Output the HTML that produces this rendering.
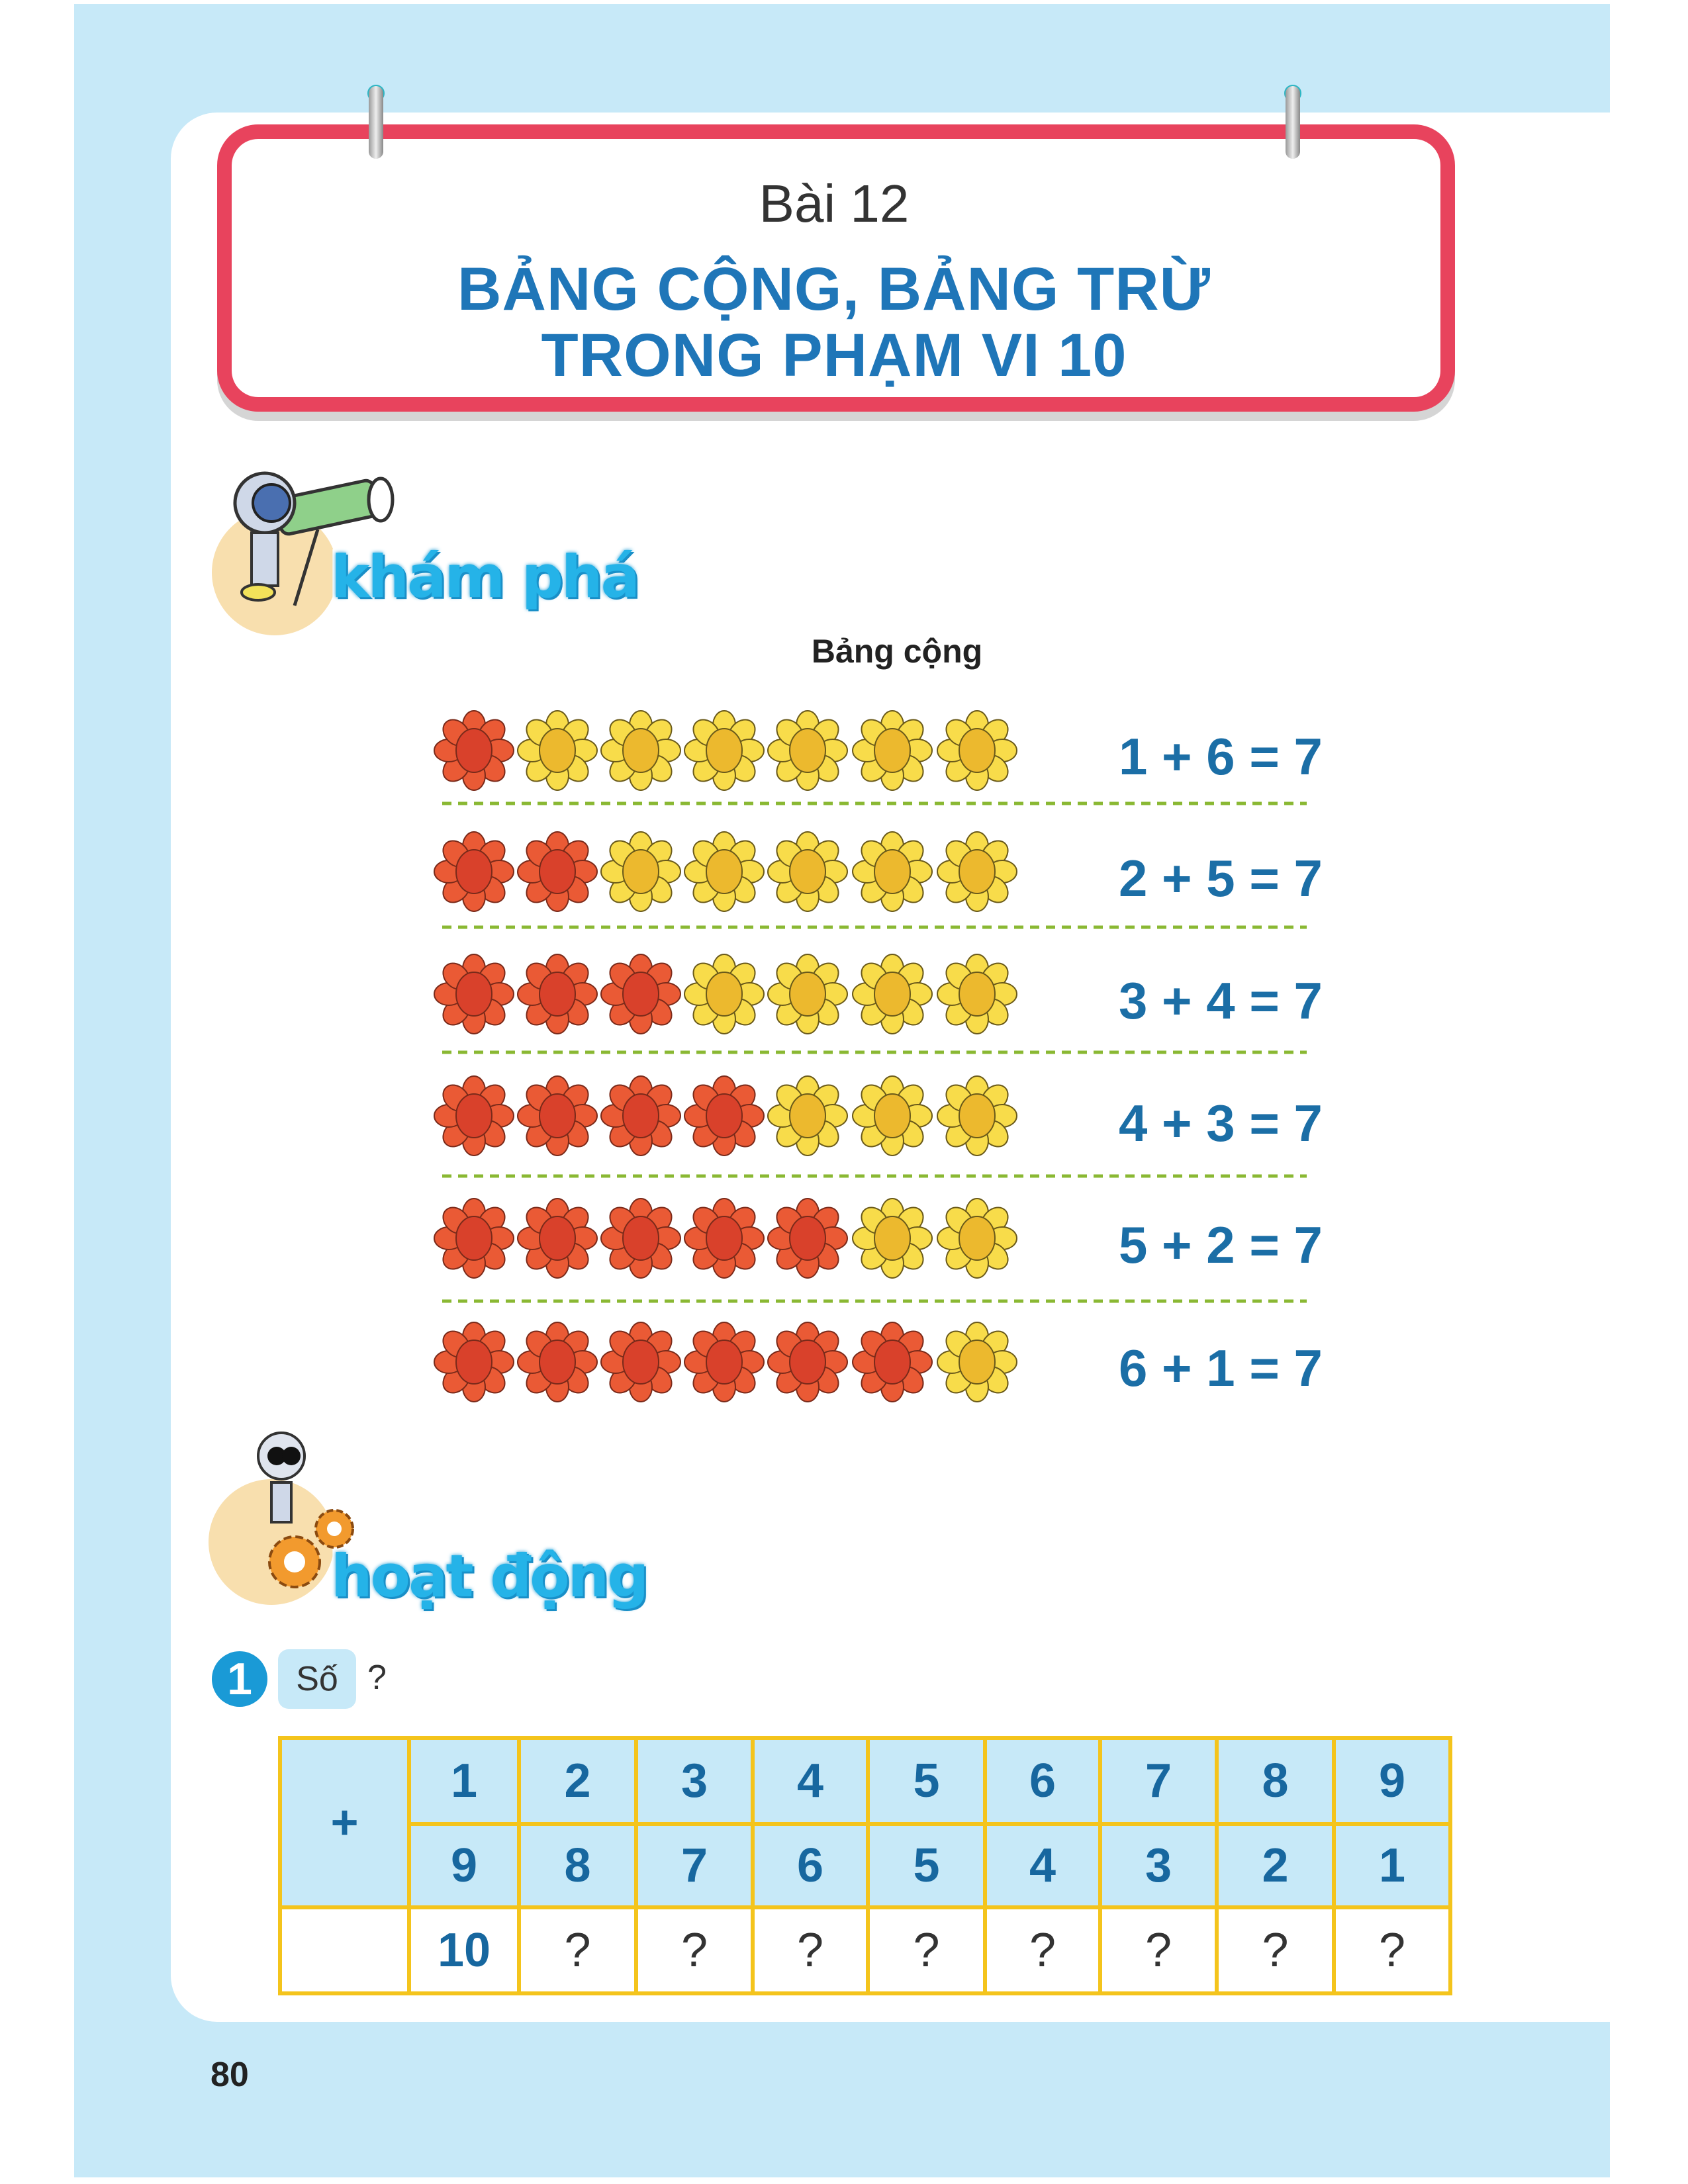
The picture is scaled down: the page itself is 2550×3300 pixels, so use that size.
<!DOCTYPE html>
<html><head><meta charset="utf-8"><style>
html,body{margin:0;padding:0}
body{width:2550px;height:3300px;position:relative;background:#fff;overflow:hidden;font-family:"Liberation Sans",sans-serif}
.abs{position:absolute}
.bg{left:112px;top:6px;width:2320px;height:3284px;background:#c7e9f8}
.panel{left:258px;top:170px;width:2174px;height:2885px;background:#fff;border-radius:70px 0 0 70px}
.title{left:328px;top:188px;width:1870px;height:434px;box-sizing:border-box;border:22px solid #e8435d;border-radius:62px;background:#fff;box-shadow:0 14px 0 #d5d5d5}
.t1{left:0;width:2520px;top:262px;text-align:center;font-size:80px;color:#333;font-weight:300}
.t2{left:0;width:2520px;text-align:center;font-size:92px;font-weight:bold;color:#1f76b8;letter-spacing:1px}
.ring{width:22px;height:110px;border-radius:11px;background:linear-gradient(90deg,#999,#eee,#888)}
.ringtop{width:26px;height:26px;border-radius:50%;border:5px solid #2bb6c4;box-sizing:border-box}
.badge{font-weight:900;font-size:88px;letter-spacing:-3px;color:#25b3e8;font-family:"DejaVu Sans","Liberation Sans",sans-serif;-webkit-text-stroke:10px #fff;paint-order:stroke fill;text-shadow:0 0 6px #1a9bd4,3px 3px 0 #1a8cc4;white-space:nowrap}
.eq{font-size:78px;font-weight:bold;color:#1b6ea6;left:1690px;width:420px;text-align:left;white-space:nowrap}
table{position:absolute;left:420px;top:2623px;border-collapse:collapse;table-layout:fixed;width:1768px}
td{border:6px solid #f4c41c;text-align:center;font-weight:bold;font-size:72px;color:#17679f;padding:0}
.q{color:#333;font-weight:normal}
</style></head><body>
<div class="abs bg"></div>
<div class="abs panel"></div>
<div class="abs title"></div>
<div class="abs ringtop" style="left:555px;top:128px"></div>
<div class="abs ring" style="left:557px;top:130px"></div>
<div class="abs ringtop" style="left:1940px;top:128px"></div>
<div class="abs ring" style="left:1942px;top:130px"></div>
<div class="abs t1" style="left:0;width:2520px">Bài 12</div>
<div class="abs t2" style="top:385px">BẢNG CỘNG, BẢNG TRỪ</div>
<div class="abs t2" style="top:485px">TRONG PHẠM VI 10</div>

<div class="abs" style="left:320px;top:770px;width:190px;height:190px;border-radius:50%;background:#f8dfae"></div>
<svg class="abs" style="left:330px;top:700px" width="280" height="220" viewBox="0 0 280 220">
<rect x="90" y="40" width="150" height="55" rx="12" fill="#8fd08a" stroke="#333" stroke-width="5" transform="rotate(-12 160 70)"/>
<ellipse cx="245" cy="55" rx="18" ry="32" fill="#fff" stroke="#333" stroke-width="5"/>
<circle cx="70" cy="60" r="45" fill="#cfd8e8" stroke="#333" stroke-width="5"/>
<circle cx="80" cy="60" r="28" fill="#4a6fb0" stroke="#222" stroke-width="4"/>
<rect x="50" y="105" width="40" height="80" fill="#cfd8e8" stroke="#333" stroke-width="4"/>
<line x1="150" y1="100" x2="115" y2="215" stroke="#333" stroke-width="5"/>
<ellipse cx="60" cy="195" rx="25" ry="12" fill="#f2e25a" stroke="#333" stroke-width="4"/>
</svg>
<div class="abs badge" style="left:500px;top:820px">khám phá</div>

<div class="abs" style="left:0;width:2710px;top:955px;text-align:center;font-size:50px;font-weight:bold;color:#222">Bảng cộng</div>

<svg class="abs" style="left:0;top:0" width="2550" height="2200">
<defs>
<g id="fr"><g fill="#ea5a35" stroke="#7a2a1a" stroke-width="2">
<ellipse cx="0" cy="-38" rx="17" ry="22"/><ellipse cx="0" cy="-38" rx="17" ry="22" transform="rotate(45)"/><ellipse cx="0" cy="-38" rx="17" ry="22" transform="rotate(90)"/><ellipse cx="0" cy="-38" rx="17" ry="22" transform="rotate(135)"/><ellipse cx="0" cy="-38" rx="17" ry="22" transform="rotate(180)"/><ellipse cx="0" cy="-38" rx="17" ry="22" transform="rotate(225)"/><ellipse cx="0" cy="-38" rx="17" ry="22" transform="rotate(270)"/><ellipse cx="0" cy="-38" rx="17" ry="22" transform="rotate(315)"/></g>
<ellipse cx="0" cy="0" rx="27" ry="33" fill="#d9412b" stroke="#7a2a1a" stroke-width="2"/></g>
<g id="fy"><g fill="#f8dc4a" stroke="#6a5a1a" stroke-width="2">
<ellipse cx="0" cy="-38" rx="17" ry="22"/><ellipse cx="0" cy="-38" rx="17" ry="22" transform="rotate(45)"/><ellipse cx="0" cy="-38" rx="17" ry="22" transform="rotate(90)"/><ellipse cx="0" cy="-38" rx="17" ry="22" transform="rotate(135)"/><ellipse cx="0" cy="-38" rx="17" ry="22" transform="rotate(180)"/><ellipse cx="0" cy="-38" rx="17" ry="22" transform="rotate(225)"/><ellipse cx="0" cy="-38" rx="17" ry="22" transform="rotate(270)"/><ellipse cx="0" cy="-38" rx="17" ry="22" transform="rotate(315)"/></g>
<ellipse cx="0" cy="0" rx="27" ry="33" fill="#ecb92e" stroke="#6a5a1a" stroke-width="2"/></g>
</defs>
<g stroke="#8ab833" stroke-width="5" stroke-dasharray="14 10">
<line x1="668" y1="1214" x2="1974" y2="1214"/><line x1="668" y1="1401" x2="1974" y2="1401"/><line x1="668" y1="1590" x2="1974" y2="1590"/><line x1="668" y1="1777" x2="1974" y2="1777"/><line x1="668" y1="1966" x2="1974" y2="1966"/>
</g>
<g transform="translate(0,1134)"><use href="#fr" x="716"/><use href="#fy" x="842"/><use href="#fy" x="968"/><use href="#fy" x="1094"/><use href="#fy" x="1220"/><use href="#fy" x="1348"/><use href="#fy" x="1476"/></g>
<g transform="translate(0,1317)"><use href="#fr" x="716"/><use href="#fr" x="842"/><use href="#fy" x="968"/><use href="#fy" x="1094"/><use href="#fy" x="1220"/><use href="#fy" x="1348"/><use href="#fy" x="1476"/></g>
<g transform="translate(0,1502)"><use href="#fr" x="716"/><use href="#fr" x="842"/><use href="#fr" x="968"/><use href="#fy" x="1094"/><use href="#fy" x="1220"/><use href="#fy" x="1348"/><use href="#fy" x="1476"/></g>
<g transform="translate(0,1686)"><use href="#fr" x="716"/><use href="#fr" x="842"/><use href="#fr" x="968"/><use href="#fr" x="1094"/><use href="#fy" x="1220"/><use href="#fy" x="1348"/><use href="#fy" x="1476"/></g>
<g transform="translate(0,1871)"><use href="#fr" x="716"/><use href="#fr" x="842"/><use href="#fr" x="968"/><use href="#fr" x="1094"/><use href="#fr" x="1220"/><use href="#fy" x="1348"/><use href="#fy" x="1476"/></g>
<g transform="translate(0,2058)"><use href="#fr" x="716"/><use href="#fr" x="842"/><use href="#fr" x="968"/><use href="#fr" x="1094"/><use href="#fr" x="1220"/><use href="#fr" x="1348"/><use href="#fy" x="1476"/></g>
</svg>
<div class="abs eq" style="top:1098px">1 + 6 = 7</div>
<div class="abs eq" style="top:1282px">2 + 5 = 7</div>
<div class="abs eq" style="top:1467px">3 + 4 = 7</div>
<div class="abs eq" style="top:1652px">4 + 3 = 7</div>
<div class="abs eq" style="top:1836px">5 + 2 = 7</div>
<div class="abs eq" style="top:2022px">6 + 1 = 7</div>

<div class="abs" style="left:315px;top:2235px;width:190px;height:190px;border-radius:50%;background:#f8dfae"></div>
<svg class="abs" style="left:350px;top:2160px" width="220" height="250" viewBox="0 0 220 250">
<circle cx="75" cy="40" r="35" fill="#dfe4ee" stroke="#333" stroke-width="4"/>
<circle cx="68" cy="40" r="14" fill="#111"/><circle cx="90" cy="40" r="14" fill="#111"/>
<rect x="60" y="80" width="30" height="60" fill="#cfd8e8" stroke="#333" stroke-width="4"/>
<circle cx="95" cy="200" r="38" fill="#f29a2e" stroke="#8a4a10" stroke-width="4" stroke-dasharray="12 6"/><circle cx="95" cy="200" r="16" fill="#fff"/>
<circle cx="155" cy="150" r="28" fill="#f29a2e" stroke="#8a4a10" stroke-width="4" stroke-dasharray="10 5"/><circle cx="155" cy="150" r="11" fill="#fff"/>
</svg>
<div class="abs badge" style="left:500px;top:2330px">hoạt động</div>

<div class="abs" style="left:320px;top:2495px;width:84px;height:84px;border-radius:50%;background:#1a9ad6;color:#fff;font-weight:bold;font-size:68px;text-align:center;line-height:84px">1</div>
<div class="abs" style="left:420px;top:2492px;width:118px;height:90px;border-radius:16px;background:#c7e9f8;font-size:52px;color:#333;text-align:center;line-height:90px">Số</div>
<div class="abs" style="left:555px;top:2505px;font-size:52px;color:#333">?</div>

<table>
<colgroup><col style="width:195px"><col style="width:166px"><col style="width:177px"><col style="width:176px"><col style="width:174px"><col style="width:177px"><col style="width:174px"><col style="width:176px"><col style="width:177px"><col style="width:176px"></colgroup>
<tr style="height:130px;background:#c7e9f8"><td rowspan="2">+</td><td>1</td><td>2</td><td>3</td><td>4</td><td>5</td><td>6</td><td>7</td><td>8</td><td>9</td></tr>
<tr style="height:126px;background:#c7e9f8"><td>9</td><td>8</td><td>7</td><td>6</td><td>5</td><td>4</td><td>3</td><td>2</td><td>1</td></tr>
<tr style="height:130px"><td></td><td>10</td><td class="q">?</td><td class="q">?</td><td class="q">?</td><td class="q">?</td><td class="q">?</td><td class="q">?</td><td class="q">?</td><td class="q">?</td></tr>
</table>

<div class="abs" style="left:318px;top:3105px;font-size:52px;font-weight:bold;color:#222">80</div>
</body></html>
